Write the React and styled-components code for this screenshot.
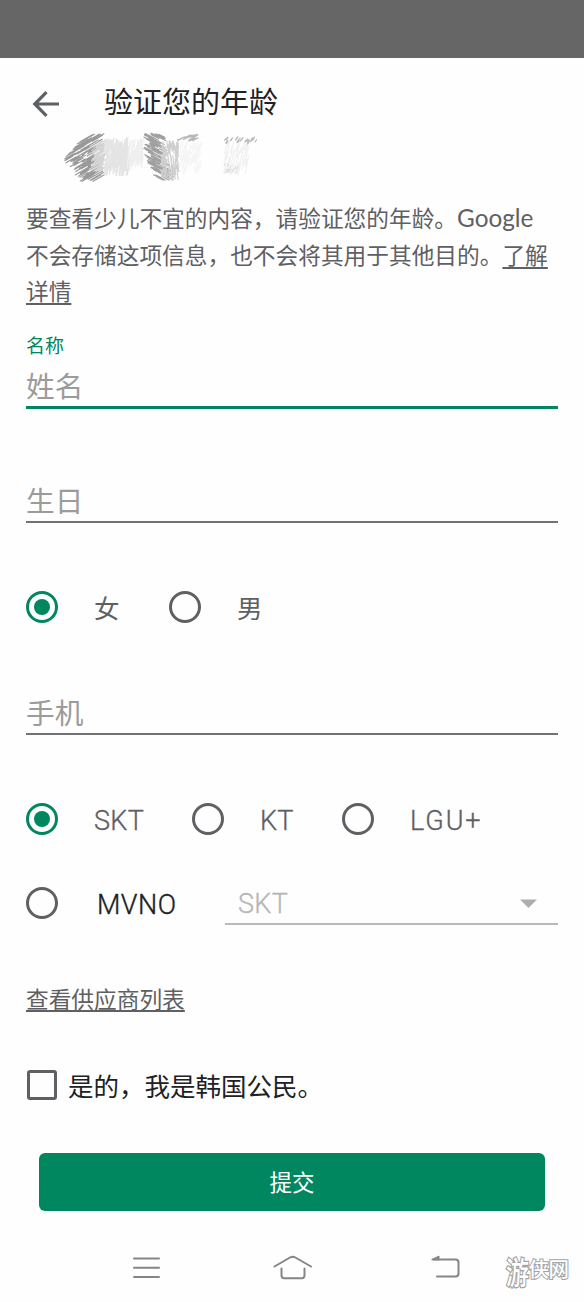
import React, { useState } from 'react';
import styled, { createGlobalStyle } from 'styled-components';

const green = '#01875f';
const grey = '#5f6063';

const GlobalStyle = createGlobalStyle`
  * { box-sizing: border-box; }
  body {
    margin: 0;
    background: #fefefe;
    color: ${grey};
    font-family: Roboto, 'Noto Sans CJK SC', sans-serif;
  }
`;

const Screen = styled.div`
  display: flex;
  flex-direction: column;
  width: 584px;
  height: 1302px;
  overflow: hidden;
`;

const StatusBar = styled.div`
  flex: none;
  height: 58px;
  background: #666;
`;

const Header = styled.header`
  display: flex;
  align-items: flex-start;
  height: 78px;
  padding: 23px 0 0 32px;
`;

const BackButton = styled.button`
  display: flex;
  width: 28px;
  height: 46px;
  padding: 10px 0 0;
  border: 0;
  background: none;
  color: ${grey};
`;

const Title = styled.h1`
  margin: 1px 0 0 44px;
  color: #202124;
  font-size: 29px;
  font-weight: 400;
  line-height: 42px;
`;

const AccountMask = styled.svg`
  flex: none;
  display: block;
  width: 240px;
  height: 54px;
  margin: -6px 0 0 60px;
`;

const Form = styled.form`
  display: flex;
  flex-direction: column;
  padding: 16px 26px 0;
`;

const Notice = styled.p`
  margin: 0;
  height: 112px;
  font-size: 22.7px;
  line-height: 36.5px;
  white-space: nowrap;
`;

const Brand = styled.span`
  font-family: Lato, sans-serif;
  font-size: 24.3px;
`;

const TextLink = styled.a`
  color: inherit;
  text-decoration: underline;
  text-decoration-thickness: ${(p) => p.$thickness || 2}px;
  text-underline-offset: ${(p) => p.$offset || 3}px;
  text-decoration-skip-ink: none;
`;

const Field = styled.label`
  display: flex;
  flex-direction: column;
  justify-content: flex-end;
  height: ${(p) => p.$height}px;
  border-bottom: ${(p) => (p.$active ? `3px solid ${green}` : '2px solid #727274')};
`;

const FieldLabel = styled.span`
  color: ${green};
  font-size: 19px;
  line-height: 26px;
`;

const Input = styled.input`
  width: 100%;
  height: 38px;
  margin-top: 8px;
  padding: 0;
  border: 0;
  outline: 0;
  background: none;
  color: #202124;
  font: 400 28.7px/38px Roboto, 'Noto Sans CJK SC', sans-serif;
  &::placeholder { color: #9b9b9b; opacity: 1; }
`;

const RadioRow = styled.div`
  display: flex;
  align-items: center;
  height: 34px;
  margin-top: ${(p) => p.$top}px;
`;

const RadioOption = styled.label`
  display: flex;
  align-items: center;
  width: ${(p) => p.$width}px;
  color: ${(p) => (p.$dark ? '#202124' : grey)};
  line-height: 34px;
`;

const HiddenInput = styled.input`
  position: absolute;
  opacity: 0;
`;

const Ring = styled.span`
  display: grid;
  place-items: center;
  flex: none;
  width: 32px;
  height: 32px;
  margin-right: ${(p) => p.$gap || 36}px;
  border: 3px solid ${(p) => (p.$on ? green : grey)};
  border-radius: 50%;
  &::after {
    content: '';
    width: 16px;
    height: 16px;
    border-radius: 50%;
    background: ${(p) => (p.$on ? green : 'transparent')};
  }
`;

const OptionText = styled.span`
  padding-top: ${(p) => p.$drop || 0}px;
  font-size: ${(p) => p.$size || 27}px;
  font-weight: ${(p) => p.$weight || 300};
  letter-spacing: ${(p) => p.$spacing || 0.3}px;
  -webkit-text-stroke: ${(p) => (p.$weight ? 0 : 0.35)}px currentColor;
`;

const Select = styled.div`
  display: flex;
  align-items: center;
  justify-content: space-between;
  width: 333px;
  height: 43px;
  padding: 3px 21px 0 13px;
  border-bottom: 2px solid #b9b9b9;
  color: #b6b6b6;
  font-size: 27px;
  font-weight: 300;
  letter-spacing: 0.3px;
  -webkit-text-stroke: 0.35px currentColor;
`;

const SupplierLine = styled.div`
  margin-top: 63px;
  height: 36px;
  font-size: 22.7px;
  line-height: 36px;
`;

const CitizenRow = styled.label`
  display: flex;
  align-items: center;
  height: 40px;
  margin-top: 46px;
  padding-left: 1px;
  color: #202124;
  font-size: 25.5px;
  line-height: 40px;
`;

const CitizenText = styled.span`
  padding-top: 4px;
`;

const Box = styled.span`
  width: 30px;
  height: 30px;
  margin-right: 11px;
  border: 3px solid ${grey};
  border-radius: 3px;
`;

const SubmitButton = styled.button`
  height: 58px;
  margin: 48px 13px 0;
  padding: 0 0 3px;
  border: 0;
  border-radius: 6px;
  background: ${green};
  color: #fff;
  font: 400 22.5px Roboto, 'Noto Sans CJK SC', sans-serif;
`;

const NavBar = styled.nav`
  display: flex;
  align-items: center;
  height: 66px;
  margin-top: 24px;
  padding-left: 132px;
  color: #858585;
`;

const NavIcon = styled.svg`
  flex: none;
  width: 40px;
  height: 30px;
  margin-right: ${(p) => p.$gap}px;
  overflow: visible;
  fill: none;
  stroke: currentColor;
  stroke-width: 2;
  stroke-linecap: round;
  stroke-linejoin: round;
`;

const Watermark = styled.div`
  display: flex;
  align-items: center;
  color: #fff;
  font: 500 20.5px/34px 'Noto Sans CJK SC', sans-serif;
  letter-spacing: -0.5px;
  -webkit-text-stroke: 2px #a2a2a2;
  paint-order: stroke fill;
`;

const WatermarkLead = styled.span`
  font-size: 23px;
  transform: translateY(2px) scaleY(1.35);
`;

const smudges = [
  { x: 27, y: 27, w: 38, h: 46, dx: 12, dy: -7, n: 120, tone: '#999999', shape: 'left' },
  { x: 39, y: 26, w: 21, h: 30, dx: 9, dy: -6, n: 65, tone: '#d4d4d4' },
  { x: 57, y: 27, w: 26, h: 34, dx: 2, dy: -12, n: 220, tone: '#e4e4e4' },
  { x: 75, y: 23, w: 17, h: 26, dx: 2, dy: -14, n: 60, tone: '#efefef' },
  { x: 99, y: 27, w: 24, h: 46, dx: 8, dy: 4, n: 130, tone: '#a0a0a0', shape: 'right' },
  { x: 110, y: 30, w: 18, h: 38, dx: 1, dy: 9, n: 95, tone: '#cfcfcf' },
  { x: 131, y: 27, w: 25, h: 32, dx: 4, dy: -10, n: 60, tone: '#f5f5f5' },
  { x: 128, y: 8, w: 22, h: 7, dx: 6, dy: -3, n: 14, tone: '#b8b8b8' },
  { x: 176, y: 27, w: 27, h: 33, dx: 2, dy: -8, n: 75, tone: '#f1f1f1' },
  { x: 181, y: 10, w: 34, h: 7, dx: 2, dy: -3, n: 26, tone: '#b8b8b8' },
  { x: 172, y: 39, w: 16, h: 12, dx: 2, dy: -3, n: 12, tone: '#dddddd' },
];

function strokesOf(s, seed) {
  let state = seed * 7919 + 17;
  const random = () => {
    state = (state * 16807) % 2147483647;
    return state / 2147483647;
  };
  let d = '';
  for (let i = 0; i < s.n; i += 1) {
    const v = random() - 0.5;
    const u = random() - 0.5;
    let shift = 0;
    if (s.shape === 'left') shift = Math.abs(v) * 26 - 7;
    if (s.shape === 'right') shift = v * 10 - (0.5 - Math.abs(v)) * 6;
    const narrow = s.shape === 'left' ? 1 - Math.abs(v) * 0.9 : 1;
    const x = s.x + u * (s.w - Math.abs(s.dx)) * narrow + shift;
    const y = s.y + v * (s.h - Math.abs(s.dy) * 0.5);
    const k = 0.6 + random() * 0.5;
    d += `M${(x - (s.dx * k) / 2).toFixed(1)} ${(y - (s.dy * k) / 2).toFixed(1)}l${(s.dx * k).toFixed(1)} ${(s.dy * k).toFixed(1)}`;
  }
  return d;
}

function Radio({ name, label, checked, onSelect, width, dark, ringGap, ...text }) {
  return (
    <RadioOption $width={width} $dark={dark}>
      <HiddenInput type="radio" name={name} checked={checked} onChange={onSelect} />
      <Ring $on={checked} $gap={ringGap} />
      <OptionText $drop={text.drop} $size={text.size} $weight={text.weight} $spacing={text.spacing}>
        {label}
      </OptionText>
    </RadioOption>
  );
}

export default function App() {
  const [gender, setGender] = useState('女');
  const [carrier, setCarrier] = useState('SKT');
  const genderProps = (v) => ({ name: 'gender', label: v, checked: gender === v, onSelect: () => setGender(v) });
  const carrierProps = (v) => ({ name: 'carrier', label: v, checked: carrier === v, onSelect: () => setCarrier(v) });

  return (
    <Screen>
      <GlobalStyle />
      <StatusBar />
      <Header>
        <BackButton type="button" aria-label="返回">
          <svg width="28" height="26" viewBox="0 0 28 26" fill="none" stroke="currentColor" strokeWidth="3.2">
            <path d="M27 13H3M14.5 1.2L2.8 13L14.5 24.8" />
          </svg>
        </BackButton>
        <Title>验证您的年龄</Title>
      </Header>
      <AccountMask viewBox="0 0 240 54" fill="none" strokeWidth="1.1" strokeLinecap="round">
        {smudges.map((s, i) => (
          <path key={i} d={strokesOf(s, i + 1)} stroke={s.tone} />
        ))}
      </AccountMask>
      <Form onSubmit={(e) => e.preventDefault()}>
        <Notice>
          要查看少儿不宜的内容，请验证您的年龄。<Brand>Google</Brand>
          <br />
          不会存储这项信息，也不会将其用于其他目的。<TextLink>了解</TextLink>
          <br />
          <TextLink>详情</TextLink>
        </Notice>
        <Field $height={97} $active>
          <FieldLabel>名称</FieldLabel>
          <Input placeholder="姓名" />
        </Field>
        <Field $height={114}>
          <Input placeholder="生日" />
        </Field>
        <RadioRow $top={67}>
          <Radio {...genderProps('女')} width={143} size={25.5} drop={3} weight={400} />
          <Radio {...genderProps('男')} width={143} size={25.5} drop={3} weight={400} />
        </RadioRow>
        <Field $height={111}>
          <Input placeholder="手机" />
        </Field>
        <RadioRow $top={67}>
          <Radio {...carrierProps('SKT')} width={166} drop={4} />
          <Radio {...carrierProps('KT')} width={150} drop={4} />
          <Radio {...carrierProps('LGU+')} width={160} drop={4} spacing={1.9} />
        </RadioRow>
        <RadioRow $top={50}>
          <Radio {...carrierProps('MVNO')} width={199} dark ringGap={39} drop={3} spacing={0.5} />
          <Select>
            SKT
            <svg width="17" height="9" viewBox="0 0 17 9" fill="#adadad">
              <path d="M0 .5H17L8.5 9Z" />
            </svg>
          </Select>
        </RadioRow>
        <SupplierLine>
          <TextLink $thickness={1.5} $offset={2}>查看供应商列表</TextLink>
        </SupplierLine>
        <CitizenRow>
          <HiddenInput type="checkbox" />
          <Box />
          <CitizenText>是的，我是韩国公民。</CitizenText>
        </CitizenRow>
        <SubmitButton type="submit">提交</SubmitButton>
      </Form>
      <NavBar>
        <NavIcon $gap={106} viewBox="0 0 40 30">
          <path d="M2 5.5H27M2 14.8H27M2 24H27" />
        </NavIcon>
        <NavIcon $gap={112} viewBox="0 0 40 30">
          <path d="M-3.500 13.500L12 4.500Q14.700 3 17.400 4.500L33 13.500M3.500 15.500V22.500Q3.500 25.200 6.200 25.200H23.800Q26.500 25.200 26.500 22.500V15.500" />
        </NavIcon>
        <NavIcon $gap={36} viewBox="0 0 40 30">
          <path d="M3 6.500H25.500Q28.500 6.500 28.500 9.500V20.500Q28.500 23.500 25.500 23.500H7" />
          <path d="M2 6.500L9 3V6.500Z" fill="currentColor" strokeWidth="1" />
        </NavIcon>
        <Watermark><WatermarkLead>游</WatermarkLead>侠网</Watermark>
      </NavBar>
    </Screen>
  );
}
